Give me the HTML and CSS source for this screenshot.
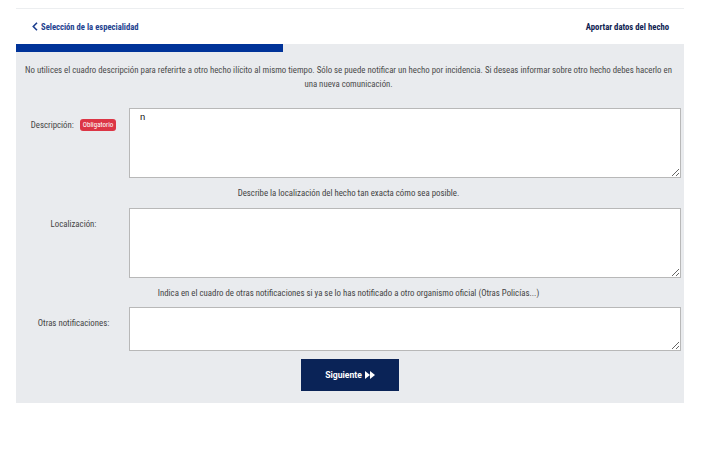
FILE: index.html
```html
<!DOCTYPE html>
<html lang="es">
<head>
<meta charset="utf-8">
<title>Aportar datos del hecho</title>
<link rel="stylesheet" href="styles.css">
</head>
<body>
<div class="page">
  <header class="head">
    <a class="back" href="#"><svg class="chev" width="6" height="9" viewBox="0 0 6 9"><path d="M5 0.8 L1.3 4.5 L5 8.2" fill="none" stroke="#1d3f8f" stroke-width="1.6"/></svg>Selección de la especialidad</a>
    <span class="title">Aportar datos del hecho</span>
  </header>
  <div class="progress"><div class="bar" style="width:40%"></div></div>
  <main class="body">
    <p class="info">No utilices el cuadro descripción para referirte a otro hecho ilícito al mismo tiempo. Sólo se puede notificar un hecho por incidencia. Si deseas informar sobre otro hecho debes hacerlo en una nueva comunicación.</p>
    <div class="row">
      <label class="lbl">Descripción: <span class="badge">Obligatorio</span></label>
      <textarea class="ta ta-desc">n</textarea>
    </div>
    <p class="hint">Describe la localización del hecho tan exacta cómo sea posible.</p>
    <div class="row">
      <label class="lbl">Localización:</label>
      <textarea class="ta ta-loc"></textarea>
    </div>
    <p class="hint hint2">Indica en el cuadro de otras notificaciones si ya se lo has notificado a otro organismo oficial (Otras Policías...)</p>
    <div class="row">
      <label class="lbl">Otras notificaciones:</label>
      <textarea class="ta ta-otras"></textarea>
    </div>
    <div class="actions">
      <button class="btn">Siguiente <svg width="10" height="8" viewBox="0 0 10 8"><path d="M0 0 L5 4 L0 8Z M5 0 L10 4 L5 8Z" fill="#fff"/></svg></button>
    </div>
  </main>
</div>
</body>
</html>
```
FILE: styles.css
```css
* { box-sizing: border-box; }
body {
  margin: 0;
  background: #fff;
  font-family: "Liberation Sans Narrow", "Roboto", sans-serif;
  font-stretch: condensed;
}
.page {
  width: 668px;
  margin: 8px 0 0 16px;
}
.head {
  height: 36px;
  border-top: 1px solid #eceef0;
  background: #fff;
  display: flex;
  align-items: center;
  justify-content: space-between;
  padding: 0 15px 0 16px;
}
.back {
  color: #1d3f8f;
  font-weight: bold;
  font-size: 8.6px;
  text-decoration: none;
  display: flex;
  align-items: center;
  gap: 3px;
}
.title {
  color: #0d2150;
  font-weight: bold;
  font-size: 8.7px;
}
.progress {
  height: 8px;
  background: #e9ebee;
}
.bar {
  height: 100%;
  background: #003399;
}
.body {
  background: #e9ebee;
  padding: 11px 3px 12px 0;
}
.info {
  margin: 0;
  text-align: center;
  color: #4a4a4a;
  font-size: 8.8px;
  line-height: 14px;
  padding: 0 4px;
}
.row {
  display: flex;
  align-items: flex-start;
}
.row:first-of-type { margin-top: 17px; }
.lbl {
  width: 113px;
  text-align: center;
  color: #444;
  font-size: 8.8px;
  padding-top: 11px;
  padding-left: 2px;
  display: flex;
  justify-content: center;
  align-items: center;
  gap: 6px;
}
.badge {
  background: #dc3545;
  color: #fff;
  font-size: 7px;
  border-radius: 3px;
  padding: 2px 3px;
  line-height: 8px;
}
.ta {
  flex: 1;
  border: 1px solid #b8b8b8;
  background: #fff;
  font-family: "Liberation Sans Narrow", "Roboto", sans-serif;
  font-size: 9.5px;
  color: #222;
  padding: 2px 10px;
  margin: 0;
  display: block;
}
.ta-desc { height: 70px; }
.ta-loc { height: 70px; }
.ta-otras { height: 44px; }
.hint {
  margin: 9px 0 9px;
  text-align: center;
  color: #444;
  font-size: 8.8px;
  line-height: 12px;
}
.hint2 { margin-bottom: 8px; }
.actions {
  display: flex;
  justify-content: center;
  margin-top: 8px;
}
.btn {
  width: 98px;
  height: 32px;
  background: #0a2357;
  border: 0;
  color: #fff;
  font-family: inherit;
  font-weight: bold;
  font-size: 8.6px;
  display: flex;
  align-items: center;
  justify-content: center;
  gap: 3px;
  margin-left: 3px;
}
```
